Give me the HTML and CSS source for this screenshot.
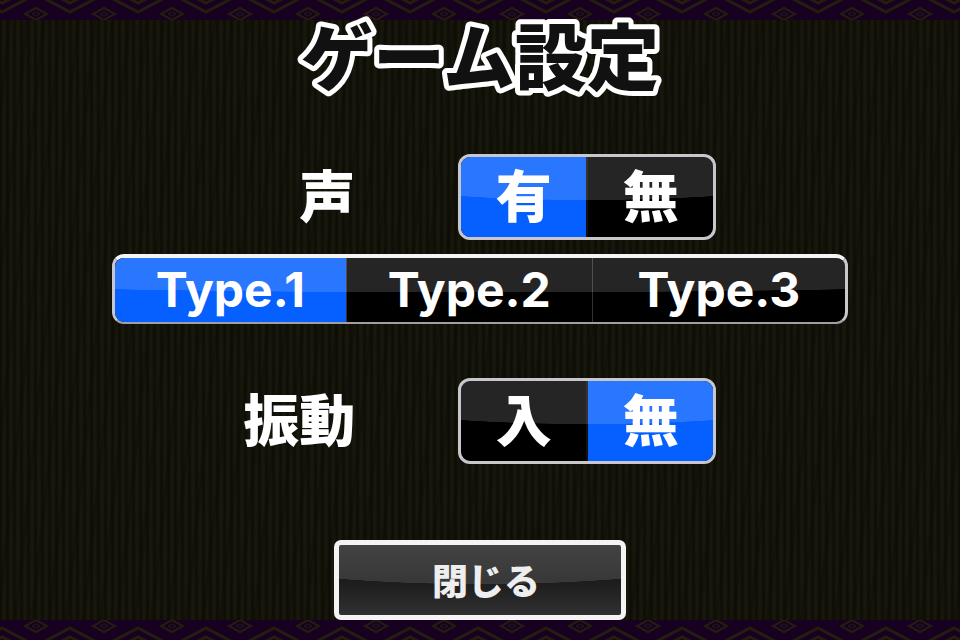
FILE: index.html
```html
<!DOCTYPE html>
<html lang="ja">
  <head>
    <meta charset="UTF-8" />
    <meta name="viewport" content="width=device-width, initial-scale=1.0" />
    <title>ゲーム設定</title>
    <link rel="stylesheet" href="styles.css" />
  </head>
  <body>
    <svg class="border" aria-hidden="true">
      <defs>
        <pattern id="diamonds" width="68" height="20" patternUnits="userSpaceOnUse">
          <rect width="68" height="20" fill="#170020" />
          <g fill="none" stroke="#221d0f">
            <path d="M-32 -6 L2 12 L36 -6 L70 12 L104 -6" stroke-width="3" />
            <path d="M-20 -8 L2 3 L24 -8 M48 -8 L70 3 L92 -8" stroke-width="3" />
            <path d="M25 14 L36 8 L47 14 L36 20 Z" stroke-width="2" />
            <path d="M32 14 L36 12 L40 14 L36 16 Z" stroke-width="1" />
          </g>
        </pattern>
      </defs>
      <rect width="100%" height="100%" fill="url(#diamonds)" />
    </svg>

    <main>
      <h1>
        <svg class="title">
          <text x="50%" y="64" text-anchor="middle">ゲーム設定</text>
        </svg>
      </h1>

      <form class="settings">
        <div class="row" role="radiogroup" aria-labelledby="voice">
          <span class="name" id="voice">声</span>
          <div class="switch">
            <label><input type="radio" name="voice" value="on" checked /><span>有</span></label>
            <label><input type="radio" name="voice" value="off" /><span>無</span></label>
          </div>
        </div>

        <div class="types" role="radiogroup" aria-labelledby="voice">
          <div class="switch wide">
            <label><input type="radio" name="type" value="1" checked /><span>Type.1</span></label>
            <label><input type="radio" name="type" value="2" /><span>Type.2</span></label>
            <label><input type="radio" name="type" value="3" /><span>Type.3</span></label>
          </div>
        </div>

        <div class="row" role="radiogroup" aria-labelledby="vibration">
          <span class="name" id="vibration">振動</span>
          <div class="switch">
            <label><input type="radio" name="vibration" value="on" /><span>入</span></label>
            <label><input type="radio" name="vibration" value="off" checked /><span>無</span></label>
          </div>
        </div>

        <button type="button" class="close">閉じる</button>
      </form>
    </main>

    <svg class="border bottom" aria-hidden="true">
      <rect width="100%" height="100%" fill="url(#diamonds)" />
    </svg>
  </body>
</html>
```
FILE: styles.css
```css
* {
  box-sizing: border-box;
}

body {
  margin: 0;
  min-height: 100vh;
  display: flex;
  flex-direction: column;
  color: white;
  font-family: "Noto Sans CJK JP", sans-serif;
  font-weight: 900;
  background-color: #15150b;
  background-image:
    repeating-linear-gradient(96deg, transparent 0 9px, #0c0c0780 12px, transparent 15px 17px),
    repeating-linear-gradient(90deg, #0e0e07 0 1px, #17170c 3px 5px, #0e0e07 7px);
}

.border {
  display: block;
  flex: none;
  width: 100%;
  height: 20px;
}

.bottom {
  transform: scaleY(-1);
}

main {
  flex: 1;
}

h1 {
  margin: 0;
  font-size: 72px;
  font-weight: 900;
}

.title {
  display: block;
  width: 100%;
  height: 76px;
  overflow: visible;
  fill: #111;
  stroke: white;
  stroke-width: 10px;
  stroke-linejoin: round;
  paint-order: stroke;
}

.settings {
  display: flex;
  flex-direction: column;
  padding-top: 58px;
}

.row {
  display: grid;
  grid-template-columns: 37% 258px;
  column-gap: 103px;
  align-items: center;
}

.name {
  padding-bottom: 8px;
  font-size: 56px;
  line-height: 76px;
  text-align: right;
}

.switch {
  position: relative;
  display: flex;
  height: 86px;
  border: 3px solid #c8c8cc;
  border-radius: 12px;
  background: black;
}

/* curved gloss over the upper half */
.switch::after {
  content: "";
  position: absolute;
  inset: 0;
  border-radius: 9px;
  background: radial-gradient(ellipse 120% 54% at 50% 0, #ffffff25 99%, transparent 100%);
  pointer-events: none;
}

.switch label {
  flex: 1;
  display: flex;
  cursor: pointer;
}

.switch label + label {
  border-left: 2px solid #111;
}

.switch input {
  position: absolute;
  opacity: 0;
}

.switch span {
  flex: 1;
  display: flex;
  align-items: center;
  justify-content: center;
  padding-bottom: 8px;
  font-size: 56px;
  line-height: 72px;
}

.switch label:first-child span {
  border-radius: 9px 0 0 9px;
}

.switch label:last-child span {
  border-radius: 0 9px 9px 0;
}

.switch input:checked + span {
  background: #0560ff;
}

.types {
  margin: 14px 112px 54px;
}

.wide {
  display: grid;
  grid-template-columns: 31fr 33fr 34fr;
  height: 70px;
  border-width: 4px 3px 2px;
  border-color: #f4f4f4 #c8c8cc #a0a0a0;
}

.wide label + label {
  border-left: 1px solid #333;
}

.wide span {
  padding-bottom: 0;
  font-family: Inter, sans-serif;
  font-size: 48px;
  font-weight: 700;
  line-height: 64px;
}

.close {
  align-self: center;
  width: 292px;
  height: 80px;
  margin-top: 76px;
  padding: 0 0 2px 12px;
  border: 5px solid #f4f4f4;
  border-radius: 7px;
  color: #eee;
  font: inherit;
  font-size: 36px;
  background:
    radial-gradient(ellipse 100% 56% at 50% 0, #ffffff20 99%, transparent 100%),
    linear-gradient(#282828, #1c1c1c 50%, #303030);
  cursor: pointer;
}
```
